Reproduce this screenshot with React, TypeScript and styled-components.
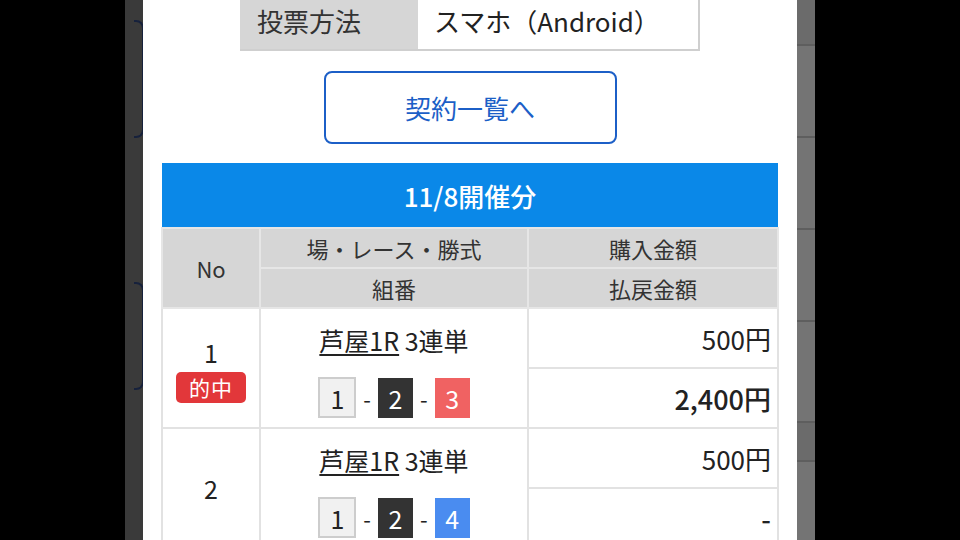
import React from "react";
import styled, { createGlobalStyle } from "styled-components";

const GlobalStyle = createGlobalStyle`
  html, body {
    margin: 0;
    padding: 0;
    background: #000;
  }
  body {
    font-family: "Noto Sans CJK JP", "Noto Sans", sans-serif;
    font-weight: 400;
    color: #222;
  }
`;

const Screen = styled.div`
  width: 960px;
  height: 540px;
  overflow: hidden;
  display: flex;
  padding-left: 125px;
  box-sizing: border-box;
  background: #000;
`;

const LeftEdge = styled.div`
  width: 18px;
  flex-shrink: 0;
  background: #3a3a3a;
  display: flex;
  flex-direction: column;
  align-items: flex-end;
`;

const GhostCard = styled.div<{ $top: number; $height: number }>`
  margin-top: ${(p) => p.$top}px;
  height: ${(p) => p.$height}px;
  flex-shrink: 0;
  width: 8px;
  border: 2px solid #16213c;
  border-left: none;
  border-radius: 0 8px 8px 0;
  margin-right: -1px;
`;

const RightEdge = styled.div`
  width: 18px;
  flex-shrink: 0;
  background: #747474;
  display: flex;
  flex-direction: column;
`;

const GhostRow = styled.div<{ $height: number; $dark?: boolean }>`
  height: ${(p) => p.$height}px;
  flex-shrink: 0;
  border-bottom: 2px solid #5e5e5e;
  background: ${(p) => (p.$dark ? "#6b6b6b" : "#747474")};
`;

const Modal = styled.div`
  width: 654px;
  flex-shrink: 0;
  background: #fff;
  padding: 0 19px;
  box-sizing: border-box;
  display: flex;
  flex-direction: column;
  align-items: center;
  overflow: hidden;

  & > * {
    flex-shrink: 0;
  }
`;

const InfoTable = styled.div`
  display: flex;
  width: 460px;
  height: 51px;
  box-sizing: border-box;
  border-bottom: 2px solid #cfcfcf;
  border-right: 2px solid #cfcfcf;
  font-size: 26px;
  color: #333;
`;

const InfoLabel = styled.div`
  width: 178px;
  background: #d6d6d6;
  padding: 0 0 8px 17px;
  box-sizing: border-box;
  display: flex;
  align-items: center;
`;

const InfoValue = styled.div`
  flex: 1;
  padding: 0 0 8px 16px;
  display: flex;
  align-items: center;
  color: #222;
`;

const ContractButton = styled.button`
  margin-top: 20px;
  width: 293px;
  height: 73px;
  box-sizing: border-box;
  border: 2px solid #1c5fc7;
  border-radius: 8px;
  background: #fff;
  color: #1c5fc7;
  font-family: inherit;
  font-weight: 400;
  font-size: 26px;
  padding: 0;
  cursor: pointer;
`;

const DayHeader = styled.div`
  margin-top: 19px;
  width: 616px;
  height: 64px;
  background: #0a88e8;
  color: #fff;
  font-size: 26px;
  font-weight: 500;
  display: flex;
  align-items: center;
  justify-content: center;
`;

const Table = styled.table`
  width: 616px;
  border-collapse: collapse;
  table-layout: fixed;
  font-family: inherit;
`;

const HeadCell = styled.th`
  background: #d6d6d6;
  border: 2px solid #e6e6e6;
  height: 38px;
  padding: 0;
  font-size: 22px;
  font-weight: 400;
  color: #333;
  text-align: center;
`;

const NoCell = styled.td`
  border: 2px solid #e2e2e2;
  padding: 0;
  text-align: center;
  vertical-align: middle;
  font-size: 25px;
`;

const NoStack = styled.div`
  display: flex;
  flex-direction: column;
  align-items: center;
  gap: 2px;
`;

const HitBadge = styled.span`
  width: 70px;
  height: 31px;
  border-radius: 5px;
  background: #e2373a;
  color: #fff;
  font-size: 21px;
  letter-spacing: 1px;
  display: flex;
  align-items: center;
  justify-content: center;
`;

const BetCell = styled.td`
  border: 2px solid #e2e2e2;
  padding: 0;
  vertical-align: top;
`;

const BetStack = styled.div`
  display: flex;
  flex-direction: column;
  align-items: center;
  padding-top: 16px;
  gap: 22px;
`;

const RaceLine = styled.div`
  font-size: 25px;
  line-height: 30px;
  color: #222;
`;

const Venue = styled.span`
  text-decoration: underline;
  text-underline-offset: 3px;
  text-decoration-thickness: 2px;
`;

const Combo = styled.div`
  display: flex;
  align-items: center;
  gap: 7px;
  font-size: 24px;
`;

const Dash = styled.span`
  font-size: 22px;
  color: #222;
`;

const Boat = styled.span<{ $bg: string; $fg: string; $border?: string }>`
  width: ${(p) => (p.$border ? "38px" : "35px")};
  height: ${(p) => (p.$border ? "41px" : "40px")};
  box-sizing: border-box;
  background: ${(p) => p.$bg};
  color: ${(p) => p.$fg};
  border: ${(p) => (p.$border ? `2px solid ${p.$border}` : "none")};
  display: flex;
  align-items: center;
  justify-content: center;
  font-size: 25px;
`;

const AmountCell = styled.td<{ $payout?: boolean }>`
  border: 2px solid #e2e2e2;
  height: 58px;
  padding: 0 6px 0 0;
  text-align: right;
  vertical-align: middle;
  font-size: ${(p) => (p.$payout ? "27px" : "26px")};
  font-weight: ${(p) => (p.$payout ? 500 : 400)};
  color: #222;
`;

type BoatColor = { bg: string; fg: string; border?: string };

const boatColors: Record<number, BoatColor> = {
  1: { bg: "#f1f1f1", fg: "#222", border: "#cdcdcd" },
  2: { bg: "#333333", fg: "#fff" },
  3: { bg: "#f06262", fg: "#fff" },
  4: { bg: "#4a8cf0", fg: "#fff" },
};

type Bet = {
  no: number;
  hit: boolean;
  venue: string;
  type: string;
  combo: number[];
  stake: string;
  payout: string;
};

const bets: Bet[] = [
  { no: 1, hit: true, venue: "芦屋1R", type: "3連単", combo: [1, 2, 3], stake: "500円", payout: "2,400円" },
  { no: 2, hit: false, venue: "芦屋1R", type: "3連単", combo: [1, 2, 4], stake: "500円", payout: "-" },
];

function BetRows({ bet }: { bet: Bet }) {
  return (
    <>
      <tr>
        <NoCell rowSpan={2}>
          <NoStack>
            <span>{bet.no}</span>
            {bet.hit && <HitBadge>的中</HitBadge>}
          </NoStack>
        </NoCell>
        <BetCell rowSpan={2}>
          <BetStack>
            <RaceLine>
              <Venue>{bet.venue}</Venue> {bet.type}
            </RaceLine>
            <Combo>
              {bet.combo.map((n, i) => {
                const c = boatColors[n];
                return (
                  <React.Fragment key={i}>
                    {i > 0 && <Dash>-</Dash>}
                    <Boat $bg={c.bg} $fg={c.fg} $border={c.border}>
                      {n}
                    </Boat>
                  </React.Fragment>
                );
              })}
            </Combo>
          </BetStack>
        </BetCell>
        <AmountCell>{bet.stake}</AmountCell>
      </tr>
      <tr>
        <AmountCell $payout>{bet.payout}</AmountCell>
      </tr>
    </>
  );
}

export default function App() {
  return (
    <>
      <GlobalStyle />
      <Screen>
        <LeftEdge>
          <GhostCard $top={20} $height={114} />
          <GhostCard $top={144} $height={104} />
        </LeftEdge>
        <Modal>
          <InfoTable>
            <InfoLabel>投票方法</InfoLabel>
            <InfoValue>スマホ（Android）</InfoValue>
          </InfoTable>
          <ContractButton>契約一覧へ</ContractButton>
          <DayHeader>11/8開催分</DayHeader>
          <Table>
            <colgroup>
              <col style={{ width: 98 }} />
              <col style={{ width: 268 }} />
              <col style={{ width: 250 }} />
            </colgroup>
            <thead>
              <tr>
                <HeadCell rowSpan={2}>No</HeadCell>
                <HeadCell>場・レース・勝式</HeadCell>
                <HeadCell>購入金額</HeadCell>
              </tr>
              <tr>
                <HeadCell>組番</HeadCell>
                <HeadCell>払戻金額</HeadCell>
              </tr>
            </thead>
            <tbody>
              {bets.map((b) => (
                <BetRows key={b.no} bet={b} />
              ))}
            </tbody>
          </Table>
        </Modal>
        <RightEdge>
          <GhostRow $height={44} $dark />
          <GhostRow $height={90} />
          <GhostRow $height={90} />
          <GhostRow $height={90} />
          <GhostRow $height={99} />
          <GhostRow $height={37} $dark />
          <GhostRow $height={90} />
        </RightEdge>
      </Screen>
    </>
  );
}
